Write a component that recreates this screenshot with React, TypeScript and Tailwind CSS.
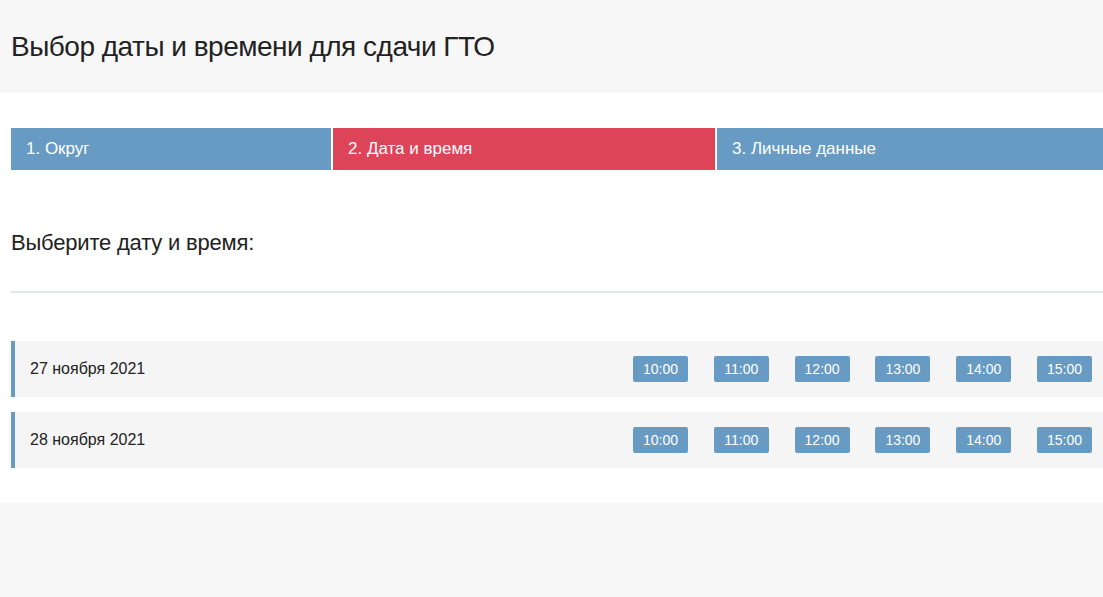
const steps = [
  { label: "1. Округ", width: "w-[320px]", active: false },
  { label: "2. Дата и время", width: "w-[382px]", active: true },
  { label: "3. Личные данные", width: "flex-1", active: false },
];

const days = ["27 ноября 2021", "28 ноября 2021"];
const times = ["10:00", "11:00", "12:00", "13:00", "14:00", "15:00"];

export default function App() {
  return (
    <div className="min-h-[597px] bg-[#f7f7f7] font-['Liberation_Sans',Arial,sans-serif] text-[#222]">
      <header className="flex h-[93px] items-center px-[11px]">
        <h1 className="text-[28px] font-normal tracking-[-0.5px] text-[#222]">
          Выбор даты и времени для сдачи ГТО
        </h1>
      </header>

      <main className="flex flex-col bg-white pb-[35px] pl-[11px] pt-[35px]">
        <nav className="flex h-[42px] gap-[2px]">
          {steps.map((s) => (
            <div
              key={s.label}
              className={`flex items-center pl-[15px] text-[17px] text-white ${s.width} ${
                s.active ? "bg-[#dd4459]" : "bg-[#679bc4]"
              }`}
            >
              {s.label}
            </div>
          ))}
        </nav>

        <h2 className="mt-[57px] text-[22px] font-normal leading-[32px] tracking-[-0.2px]">
          Выберите дату и время:
        </h2>

        <hr className="mt-[32px] border-0 border-t-2 border-[#e5e8eb]" />

        <div className="mt-[48px] flex flex-col gap-[15px]">
          {days.map((d) => (
            <div
              key={d}
              className="flex h-[56px] items-center justify-between border-l-4 border-[#679bc4] bg-[#f5f5f5] pl-[15px] pr-[11px]"
            >
              <span className="text-[16px]">{d}</span>
              <div className="flex gap-[25.8px]">
                {times.map((t) => (
                  <button
                    key={t}
                    className="flex h-[26px] w-[55px] items-center justify-center rounded-[2px] bg-[#679bc4] text-[14px] text-white"
                  >
                    {t}
                  </button>
                ))}
              </div>
            </div>
          ))}
        </div>
      </main>
    </div>
  );
}
